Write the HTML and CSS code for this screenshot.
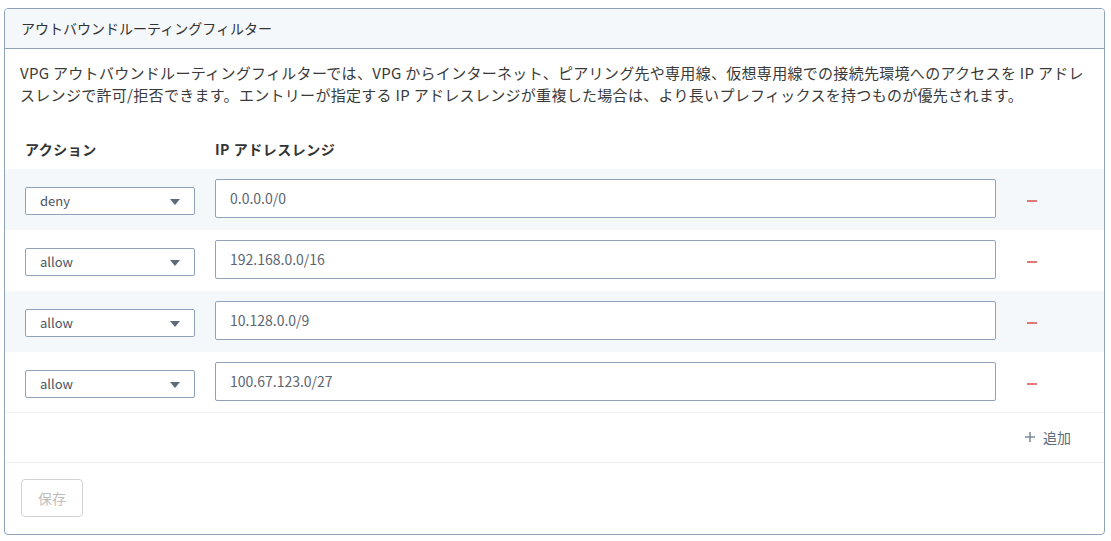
FILE: index.html
```html
<!DOCTYPE html>
<html lang="ja">
<head>
    <meta charset="UTF-8">
    <title>アウトバウンドルーティングフィルター</title>
    <link rel="stylesheet" href="styles.css">
</head>
<body>
    <div class="card">
        <div class="card-header">アウトバウンドルーティングフィルター</div>
        <p class="desc">VPG アウトバウンドルーティングフィルターでは、VPG からインターネット、ピアリング先や専用線、仮想専用線での接続先環境へのアクセスを IP アドレスレンジで許可/拒否できます。エントリーが指定する IP アドレスレンジが重複した場合は、より長いプレフィックスを持つものが優先されます。</p>

        <div class="filter-head">
            <span>アクション</span>
            <span>IP アドレスレンジ</span>
        </div>

        <div class="filter-row striped">
            <div class="select">deny<span class="caret"></span></div>
            <div class="input">0.0.0.0/0</div>
            <span class="remove"></span>
        </div>
        <div class="filter-row">
            <div class="select">allow<span class="caret"></span></div>
            <div class="input">192.168.0.0/16</div>
            <span class="remove"></span>
        </div>
        <div class="filter-row striped">
            <div class="select">allow<span class="caret"></span></div>
            <div class="input">10.128.0.0/9</div>
            <span class="remove"></span>
        </div>
        <div class="filter-row last">
            <div class="select">allow<span class="caret"></span></div>
            <div class="input">100.67.123.0/27</div>
            <span class="remove"></span>
        </div>

        <div class="add-row">
            <span class="add">
                <svg class="plus" width="10" height="10" viewBox="0 0 10 10"><path d="M5 0v10M0 5h10" stroke="#7f8c9a" stroke-width="1.6"/></svg>
                追加
            </span>
        </div>

        <div class="card-footer">
            <button class="save" disabled>保存</button>
        </div>
    </div>
</body>
</html>
```

FILE: styles.css
```css
body {
    margin: 0;
    padding: 8px 6px 0 4px;
    font-family: "Noto Sans CJK JP", "Noto Sans", sans-serif;
    font-size: 14px;
    color: #333;
    background: #fff;
}

.card {
    border: 1px solid #8fa3b8;
    border-radius: 4px;
    height: 527px;
    box-sizing: border-box;
    overflow: hidden;
}

.card-header {
    height: 39px;
    line-height: 39px;
    padding-left: 16px;
    background: #f5f8fb;
    border-bottom: 1px solid #8fa3b8;
    font-size: 14px;
    color: #333;
}

.desc {
    margin: 0;
    padding: 13px 16px 0 15px;
    height: 67px;
    line-height: 22px;
    font-size: 15px;
    letter-spacing: 0.3px;
    color: #3a3a3a;
}

.filter-head {
    display: grid;
    grid-template-columns: 170px 781px;
    column-gap: 20px;
    padding-left: 20px;
    height: 40px;
    line-height: 40px;
    font-weight: bold;
    letter-spacing: 0.5px;
    color: #333;
}

.filter-row {
    display: grid;
    grid-template-columns: 170px 781px auto;
    column-gap: 20px;
    align-items: start;
    padding-left: 20px;
    padding-top: 10px;
    height: 51px;
}

.filter-row.striped {
    background: #f5f8fb;
}

.filter-row.last {
    border-bottom: 1px solid #eef1f4;
    height: 50px;
}

.select {
    position: relative;
    margin-top: 8px;
    height: 26px;
    line-height: 26px;
    padding-left: 14px;
    border: 1px solid #8fa3b8;
    border-radius: 2px;
    background: #fff;
    font-size: 13px;
    color: #4a5563;
}

.caret {
    position: absolute;
    right: 14px;
    top: 11px;
    border-left: 5.5px solid transparent;
    border-right: 5.5px solid transparent;
    border-top: 6px solid #5d6c7c;
}

.input {
    height: 37px;
    line-height: 37px;
    padding-left: 14px;
    border: 1px solid #8fa3b8;
    border-radius: 2px;
    background: #fff;
    color: #5b6672;
}

.remove {
    display: block;
    margin-top: 21px;
    margin-left: 11px;
    width: 10px;
    height: 2px;
    background: #e07878;
}

.add-row {
    height: 47px;
    padding: 0 33px 2px 0;
    display: flex;
    justify-content: flex-end;
    align-items: center;
    border-bottom: 1px solid #eef1f4;
}

.add {
    display: flex;
    align-items: center;
    gap: 8px;
    color: #5b6b7c;
    font-size: 14px;
}

.card-footer {
    padding: 16px 16px;
}

.save {
    width: 62px;
    height: 38px;
    border: 1px solid #d2d2d2;
    border-radius: 4px;
    background: #fff;
    color: #bdbdbd;
    font-family: "Noto Sans CJK JP", sans-serif;
    font-size: 14px;
}
```
